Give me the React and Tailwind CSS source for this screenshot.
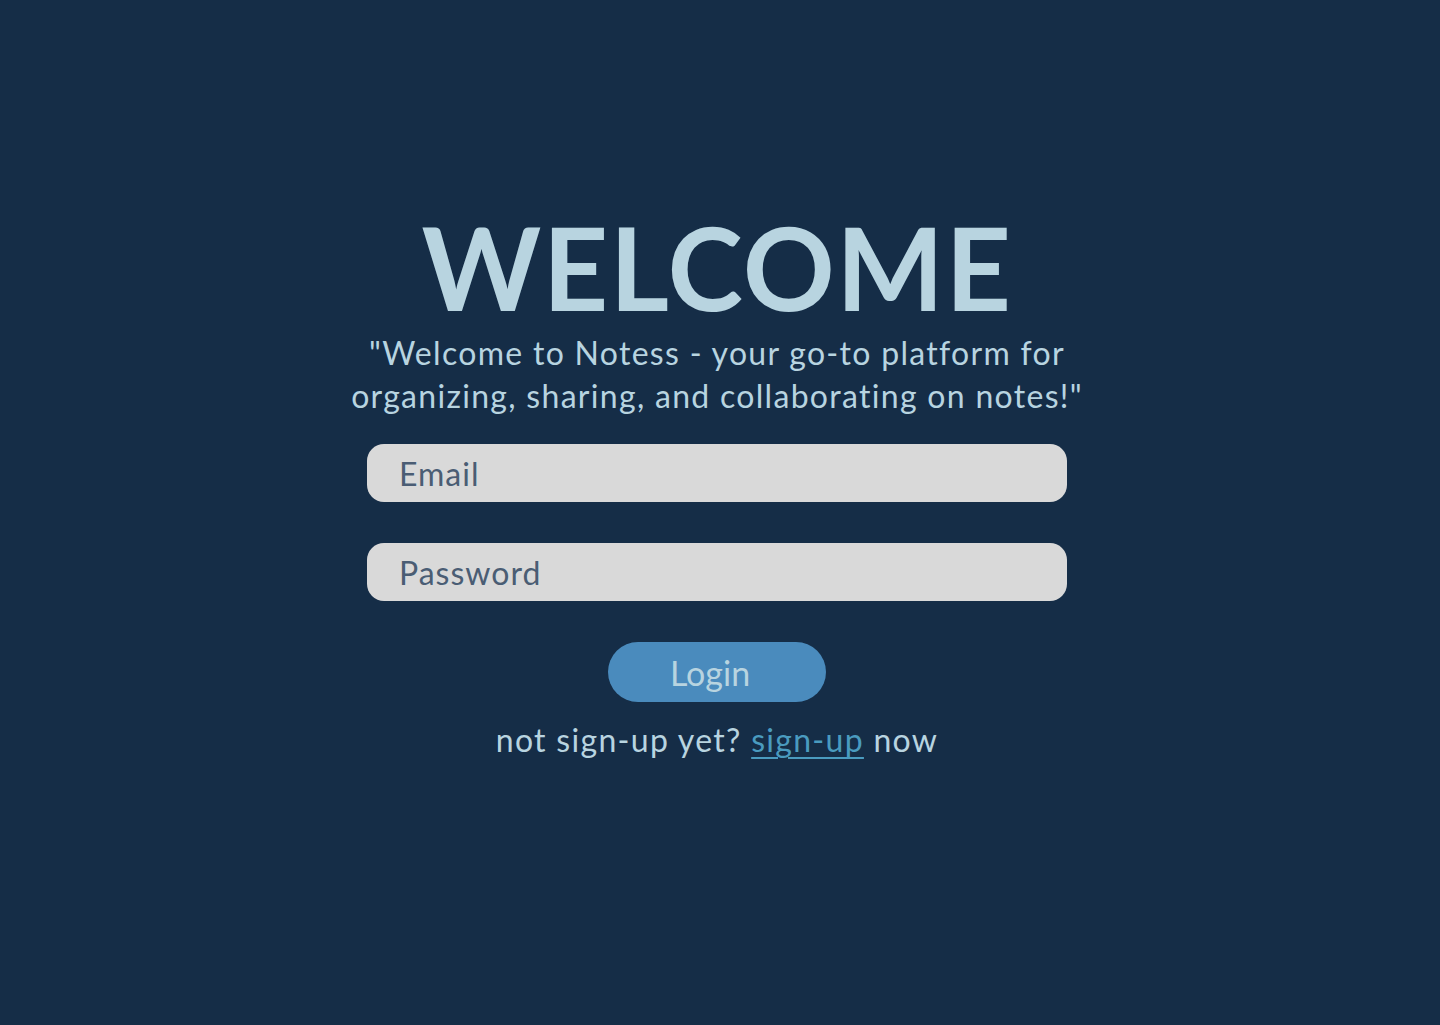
export default function App() {
  return (
    <div className="min-h-[1025px] w-full bg-[#152d47] flex flex-col items-center pt-[210px] pr-[6px] font-['Lato',sans-serif] text-[#b8d4e0]">
      <h1 className="text-[114px] leading-none font-bold tracking-[1.5px] text-[#b8d4e0]">WELCOME</h1>
      <p className="mt-[7px] text-[32px] leading-[43px] tracking-[1.3px] text-center w-[780px]">
        "Welcome to Notess - your go-to platform for organizing, sharing, and collaborating on notes!"
      </p>
      <form className="mt-[27px] flex flex-col items-center w-[700px]">
        <input
          type="email"
          placeholder="Email"
          className="w-full h-[58px] rounded-[17px] bg-[#d9d9d9] px-[32px] text-[32px] tracking-[1px] text-[#4a5d74] placeholder:text-[#4a5d74] outline-none"
        />
        <input
          type="password"
          placeholder="Password"
          className="mt-[41px] w-full h-[58px] rounded-[17px] bg-[#d9d9d9] px-[32px] text-[32px] tracking-[1px] text-[#4a5d74] placeholder:text-[#4a5d74] outline-none"
        />
        <button
          type="button"
          className="mt-[41px] w-[218px] h-[60px] rounded-full bg-[#4a8bbd] text-[34px] font-normal text-[#b8d4e0] pr-[14px]"
        >
          Login
        </button>
        <p className="mt-[16px] text-[32px] leading-[43px] tracking-[1.3px]">
          not sign-up yet?{" "}
          <a href="#" className="text-[#4a9bbf] underline underline-offset-[5px] decoration-[2px]">sign-up</a>{" "}
          now
        </p>
      </form>
    </div>
  );
}
